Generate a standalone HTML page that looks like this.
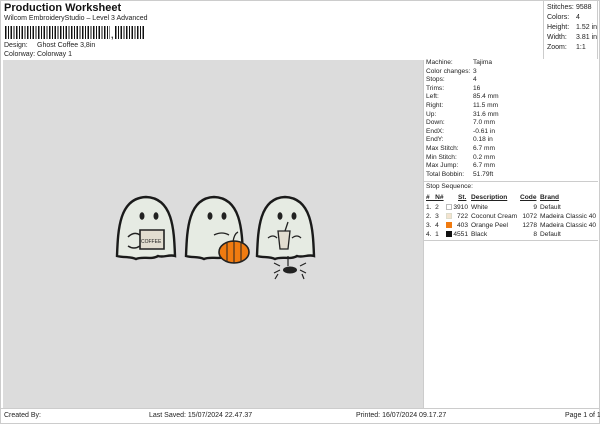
<!DOCTYPE html><html><head><style>
*{margin:0;padding:0;box-sizing:border-box}
body{width:600px;height:424px;background:#fff;font-family:"Liberation Sans",sans-serif;font-size:7px;color:#222;position:relative;overflow:hidden}
.a{position:absolute;white-space:nowrap}
.t{font-size:6.6px}
</style></head><body>
<div class="a" style="left:0;top:0;width:600px;height:424px;border:1px solid #ccc"></div>
<div class="a" style="left:4px;top:2px;font-size:11px;font-weight:bold;color:#111">Production Worksheet</div>
<div class="a" style="left:4px;top:15px">Wilcom EmbroideryStudio – Level 3 Advanced</div>
<div class="a" style="left:5px;top:26px;width:140px;height:13px;background:repeating-linear-gradient(90deg,#111 0 1.5px,#fff 1.5px 3px,#111 3px 4px,#fff 4px 5.5px)"></div>
<div class="a" style="left:110px;top:26px;width:5px;height:14px;background:#fff"></div>
<div class="a" style="left:111px;top:30px;font-size:9px;font-weight:bold">,</div>
<div class="a" style="left:4px;top:42px">Design:</div><div class="a" style="left:37px;top:42px">Ghost Coffee 3,8in</div>
<div class="a" style="left:4px;top:51px">Colorway:</div><div class="a" style="left:37px;top:51px">Colorway 1</div>
<div class="a" style="left:543px;top:0;width:1px;height:59px;background:#ccc"></div>
<div class="a" style="left:597px;top:0;width:1px;height:59px;background:#ccc"></div>
<div class="a" style="left:547px;top:3px;line-height:10px">Stitches:<br>Colors:<br>Height:<br>Width:<br>Zoom:</div>
<div class="a" style="left:576px;top:3px;line-height:10px">9588<br>4<br>1.52 in<br>3.81 in<br>1:1</div>
<div class="a" style="left:3px;top:60px;width:420px;height:348px;background:#dcdcdc"></div>
<div class="a" style="left:423px;top:60px;width:1px;height:348px;background:#ccc"></div>
<div class="a t" style="left:426px;top:59px;line-height:8.6px">Machine:<br>Color changes:<br>Stops:<br>Trims:<br>Left:<br>Right:<br>Up:<br>Down:<br>EndX:<br>EndY:<br>Max Stitch:<br>Min Stitch:<br>Max Jump:<br>Total Bobbin:</div>
<div class="a t" style="left:473px;top:59px;line-height:8.6px">Tajima<br>3<br>4<br>16<br>85.4 mm<br>11.5 mm<br>31.6 mm<br>7.0 mm<br>-0.61 in<br>0.18 in<br>6.7 mm<br>0.2 mm<br>6.7 mm<br>51.79ft</div>
<div class="a" style="left:423px;top:181px;width:175px;height:1px;background:#ccc"></div>
<div class="a t" style="left:426px;top:183px">Stop Sequence:</div>
<div class="a t" style="left:426px;top:194px;font-weight:bold;text-decoration:underline">#&nbsp;&nbsp;&nbsp;N#</div>
<div class="a t" style="left:458px;top:194px;font-weight:bold;text-decoration:underline">St.</div>
<div class="a t" style="left:471px;top:194px;font-weight:bold;text-decoration:underline">Description</div>
<div class="a t" style="left:520px;top:194px;font-weight:bold;text-decoration:underline">Code</div>
<div class="a t" style="left:540px;top:194px;font-weight:bold;text-decoration:underline">Brand</div>
<div class="a t" style="left:426px;top:203px;line-height:9px">1.&nbsp;&nbsp;2<br>2.&nbsp;&nbsp;3<br>3.&nbsp;&nbsp;4<br>4.&nbsp;&nbsp;1</div>
<div class="a" style="left:446px;top:204px;width:6px;height:6px;border:1px solid #bbb;background:#fff"></div>
<div class="a" style="left:446px;top:213px;width:6px;height:6px;border:1px solid #ddc;background:#f3e3cf"></div>
<div class="a" style="left:446px;top:222px;width:6px;height:6px;background:#f07b10"></div>
<div class="a" style="left:446px;top:231px;width:6px;height:6px;background:#111"></div>
<div class="a t" style="left:452px;top:203px;line-height:9px;text-align:right;width:16px">3910<br>722<br>403<br>4551</div>
<div class="a t" style="left:471px;top:203px;line-height:9px">White<br>Coconut Cream<br>Orange Peel<br>Black</div>
<div class="a t" style="left:514px;top:203px;line-height:9px;text-align:right;width:23px">9<br>1072<br>1278<br>8</div>
<div class="a t" style="left:540px;top:203px;line-height:9px">Default<br>Madeira Classic 40<br>Madeira Classic 40<br>Default</div>
<div class="a" style="left:423px;top:240px;width:175px;height:1px;background:#ccc"></div>
<div class="a" style="left:0;top:408px;width:600px;height:1px;background:#ccc"></div>
<div class="a" style="left:4px;top:412px">Created By:</div>
<div class="a" style="left:149px;top:412px">Last Saved: 15/07/2024 22.47.37</div>
<div class="a" style="left:356px;top:412px">Printed: 16/07/2024 09.17.27</div>
<div class="a" style="left:565px;top:412px">Page 1 of 1</div>
<svg class="a" style="left:112px;top:190px" width="220" height="100" viewBox="0 0 220 100">
<g fill="#e6ebe3" stroke="#1a1a1a" stroke-width="2.4">
<path d="M5 66 C6 40 7 8 34 7 C61 8 62 40 63 66 C57 64 52 68 46 66 C40 70 30 66 24 69 C18 66 12 68 5 66Z"/>
<path d="M74 66 C75 40 76 8 102 7 C129 8 130 40 131 66 C125 64 120 68 114 66 C108 70 98 66 92 69 C86 66 80 68 74 66Z"/>
<path d="M145 66 C146 40 147 8 173 7 C200 8 201 40 202 66 C196 64 191 68 185 66 C179 70 169 66 163 69 C157 66 151 68 145 66Z"/>
</g>
<g fill="#222"><ellipse cx="30" cy="26" rx="2.5" ry="3.8"/><ellipse cx="44" cy="26" rx="2.5" ry="3.8"/>
<ellipse cx="98" cy="26" rx="2.5" ry="3.8"/><ellipse cx="112" cy="26" rx="2.5" ry="3.8"/>
<ellipse cx="168" cy="26" rx="2.5" ry="3.8"/><ellipse cx="182" cy="26" rx="2.5" ry="3.8"/></g>
<path d="M28 40 h24 v19 h-24z" fill="#e2ddd0" stroke="#222" stroke-width="1.6"/>
<path d="M16 47 q6 -6 12 -2 M16 56 q6 4 12 0" fill="none" stroke="#222" stroke-width="1.5"/>
<text x="29" y="53" font-size="5" font-family="Liberation Sans" fill="#222">COFFEE</text>
<ellipse cx="122" cy="62" rx="15" ry="11" fill="#f07b10" stroke="#222" stroke-width="1.6"/>
<path d="M115 53 v18 M122 51 v22 M129 53 v18" stroke="#222" stroke-width="1"/>
<path d="M121 52 q1 -8 5 -10 M102 45 q8 -4 15 0" fill="none" stroke="#222" stroke-width="1.3"/>
<path d="M166 41 h12 l-2 18 h-8z" fill="#e2ddd0" stroke="#222" stroke-width="1.3"/>
<path d="M173 41 l3 -9 M156 48 q5 -4 9 0 M180 48 q5 -4 9 0" fill="none" stroke="#222" stroke-width="1.3"/>
<ellipse cx="178" cy="80" rx="7" ry="3.5" fill="#222"/>
<path d="M168 76 l-6 -3 M168 80 l-6 3 M166 84 l-3 5 M188 76 l6 -3 M188 80 l6 3 M190 84 l2 5 M176 66 v10" stroke="#222" stroke-width="1.2" fill="none"/>
</svg>
</body></html>
